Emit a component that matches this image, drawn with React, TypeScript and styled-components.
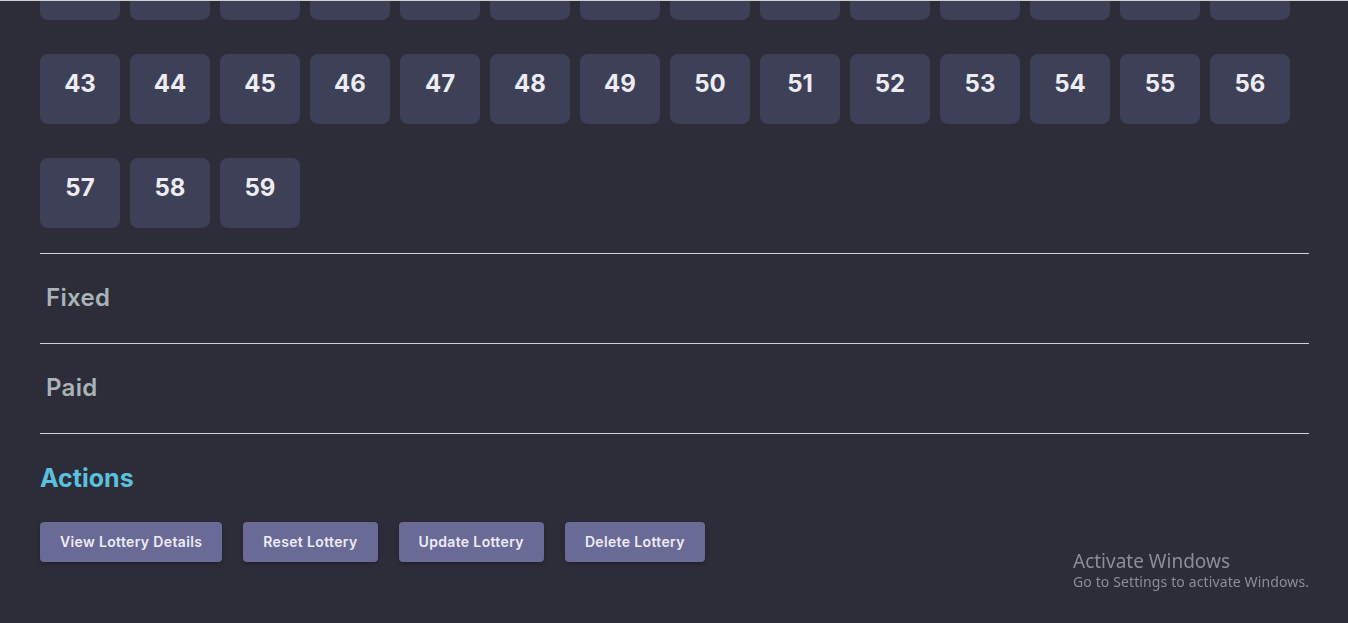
import React from "react";
import styled, { createGlobalStyle } from "styled-components";

const GlobalStyle = createGlobalStyle`
  html, body {
    margin: 0;
    padding: 0;
    background: #2d2d3a;
  }
  body {
    font-family: Inter, "Noto Sans", sans-serif;
    color: #e6e6ee;
  }
  * { box-sizing: border-box; }
`;

const Page = styled.div`
  height: 100vh;
  overflow: hidden;
  background: #2d2d3a;
  border-top: 1px solid #cfcfd4;
`;

const Content = styled.main<{ $scroll: number }>`
  margin-top: ${(p) => -p.$scroll}px;
  padding: 0 39px 40px 40px;
  display: flex;
  flex-direction: column;
`;

const TicketGrid = styled.div`
  display: flex;
  flex-wrap: wrap;
  gap: 34px 10px;
  margin-bottom: 25px;
`;

const Ticket = styled.button`
  width: 80px;
  height: 70px;
  border: none;
  border-radius: 8px;
  background: #3e4057;
  color: #ececf2;
  font-family: Inter, "Liberation Sans", sans-serif;
  font-weight: 700;
  font-size: 24px;
  line-height: 24px;
  padding: 18px 0 0;
  display: flex;
  justify-content: center;
  align-items: flex-start;
  cursor: pointer;
`;

const Divider = styled.hr`
  margin: 0;
  border: none;
  height: 1px;
  background: #cfcfd4;
`;

const StatusRow = styled.div`
  height: 89px;
  display: flex;
  align-items: center;
  padding: 0 0 1px 6px;
  font-size: 24px;
  line-height: 1.2;
  font-weight: 600;
  letter-spacing: 0.3px;
  color: #a9b3b8;
`;

const SectionTitle = styled.h2`
  margin: 29px 0 29px;
  font-size: 25px;
  line-height: 30px;
  font-weight: 700;
  color: #5bc0de;
`;

const ButtonRow = styled.div`
  display: flex;
  gap: 21px;
`;

const ActionButton = styled.button`
  height: 40px;
  padding: 0 20px 1px;
  border: none;
  border-radius: 4px;
  background: #6a6a96;
  color: #ececf4;
  font-family: Inter, sans-serif;
  font-size: 14px;
  font-weight: 600;
  letter-spacing: 0.35px;
  box-shadow: 0 2px 4px rgba(0, 0, 0, 0.25);
  cursor: pointer;
`;

const Watermark = styled.div`
  position: fixed;
  left: 1073px;
  bottom: 32px;
  font-family: "Noto Sans", "Open Sans", sans-serif;
  color: #8d8d95;
  pointer-events: none;
`;

const WatermarkTitle = styled.div`
  font-size: 19px;
  line-height: 24px;
`;

const WatermarkText = styled.div`
  font-size: 14px;
  line-height: 18px;
  letter-spacing: 0.12px;
  white-space: nowrap;
`;

const tickets = Array.from({ length: 59 }, (_, i) => i + 1);

export default function App() {
  return (
    <>
      <GlobalStyle />
      <Page>
        <Content $scroll={259}>
          <TicketGrid>
            {tickets.map((n) => (
              <Ticket key={n}>{n}</Ticket>
            ))}
          </TicketGrid>
          <Divider />
          <StatusRow>Fixed</StatusRow>
          <Divider />
          <StatusRow>Paid</StatusRow>
          <Divider />
          <SectionTitle>Actions</SectionTitle>
          <ButtonRow>
            <ActionButton>View Lottery Details</ActionButton>
            <ActionButton>Reset Lottery</ActionButton>
            <ActionButton>Update Lottery</ActionButton>
            <ActionButton>Delete Lottery</ActionButton>
          </ButtonRow>
        </Content>
      </Page>
      <Watermark>
        <WatermarkTitle>Activate Windows</WatermarkTitle>
        <WatermarkText>Go to Settings to activate Windows.</WatermarkText>
      </Watermark>
    </>
  );
}
